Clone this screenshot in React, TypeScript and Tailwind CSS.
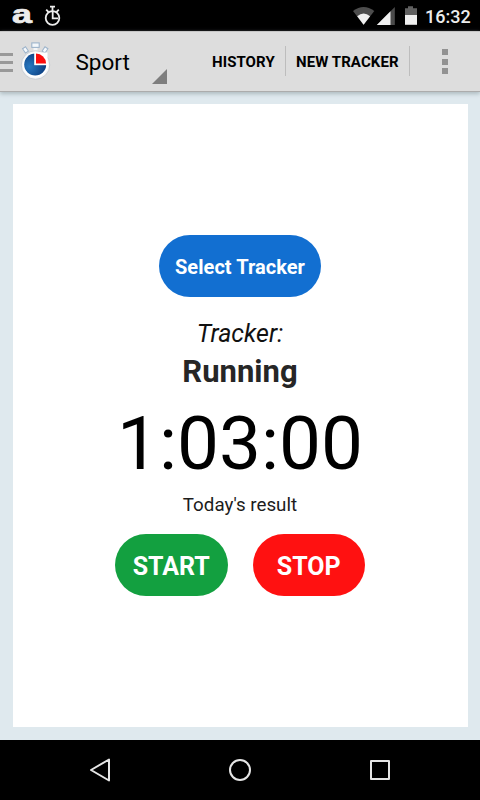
import type { ReactNode } from "react";

function AppLogo() {
  return (
    <svg width="36" height="44" viewBox="0 0 36 44" className="shrink-0">
      <defs>
        <radialGradient id="dial" cx="0.25" cy="0.6" r="0.8">
          <stop offset="0" stopColor="#2878c0" />
          <stop offset="1" stopColor="#073678" />
        </radialGradient>
      </defs>
      <rect x="16.5" y="5" width="4" height="6" fill="#f4f6f8" />
      <rect x="14.8" y="1.9" width="7.4" height="4.5" fill="#f3f7fb" stroke="#9db4cb" strokeWidth="1.1" />
      <g fill="#f6f9fc" stroke="#9db4cb" strokeWidth="1">
        <rect x="-1.8" y="-2.6" width="3.6" height="5.2" transform="translate(8.5 8.9) rotate(-34)" />
        <rect x="-1.8" y="-2.6" width="3.6" height="5.2" transform="translate(28 8.9) rotate(34)" />
      </g>
      <circle cx="18.5" cy="24" r="14.3" fill="#f4f5f6" stroke="#c5cbd1" strokeWidth="0.9" />
      <circle cx="18.3" cy="24" r="12.5" fill="#fff" />
      <circle cx="18.2" cy="23.5" r="11" fill="url(#dial)" />
      <path d="M17.2 11.5V24.2H30.5V11.5z" fill="#fff" />
      <path d="M19 12.6A10.2 10.2 0 0 1 29.1 22.4H19z" fill="#fb0d0d" />
    </svg>
  );
}

function StatusBar() {
  return (
    <div className="flex h-[31px] items-center bg-black pl-3 text-white">
      <svg width="52" height="31" viewBox="0 0 52 31">
        <text x="0" y="22.7" transform="scale(1.38 1)" fill="#ececec" stroke="#ececec" strokeWidth="0.7" className="font-['Liberation_Sans',sans-serif] text-[26px] font-bold">a</text>
        <g fill="none" stroke="#ededed" strokeWidth="1.8">
          <circle cx="40.5" cy="18" r="6.8" />
          <path d="M40.7 12v6.3h5.3M38 6.6h5M40.5 7v4M34.2 9.6l2.4 2.6M46.8 9.6l-2.4 2.6" />
        </g>
      </svg>
      <svg width="64" height="31" viewBox="0 0 64 31" className="ml-[289px]">
        <path d="M0 11Q10.6 2.8 21.3 11L10.6 24.7z" fill="#4d4d4d" />
        <path d="M4.2 16.3Q10.6 10.8 17.1 16.3L10.6 24.7z" fill="#f0f0f0" />
        <path d="M41.8 7v18H23.8z" fill="#4b4b4b" />
        <path d="M37.5 11.3V25H23.8z" fill="#f0f0f0" />
        <path d="M52 8.2h3V6.3h5v1.9h4v7H52z" fill="#606060" />
        <path d="M52 15h12v9.8H52z" fill="#f0f0f0" />
      </svg>
      <span className="ml-[8px] mt-[3px] text-[18px] leading-[22px] font-medium text-[#ececec]">16:32</span>
    </div>
  );
}

function Header() {
  return (
    <header className="relative z-10 flex h-[61px] items-start border-t border-b border-t-[#c6c6c6] border-b-[#acacac] bg-[#dddddd] text-black shadow-[0_2px_4px_#aebbc0]">
      <div className="mt-[21px] flex w-[13px] flex-col gap-[5px]">
        <span className="h-[3px] bg-[#999]" />
        <span className="h-[3px] bg-[#999]" />
        <span className="h-[3px] bg-[#999]" />
      </div>
      <div className="ml-[4px] mt-[9px]"><AppLogo /></div>
      <div className="ml-[22.5px] mt-[16px] w-[76.5px] text-[22.5px] leading-7">Sport</div>
      <svg width="15" height="15" viewBox="0 0 15 15" className="mt-[37px]"><path d="M15 0v15H0z" fill="#7e7e7e" /></svg>
      <div className="ml-[45px] mt-[20px] w-[73px] whitespace-nowrap text-[15px] leading-5 font-bold tracking-[0.08px]">HISTORY</div>
      <span className="mt-[14px] h-[30px] w-px bg-[#bdbdbd]" />
      <div className="ml-[10px] mt-[20px] w-[113px] whitespace-nowrap text-[15px] leading-5 font-bold tracking-[0.08px]">NEW TRACKER</div>
      <span className="mt-[14px] h-[30px] w-px bg-[#bdbdbd]" />
      <div className="ml-[32px] mt-[17px] flex w-[6px] flex-col gap-[3.5px]">
        <span className="h-[6px] bg-[#929292]" />
        <span className="h-[6px] bg-[#929292]" />
        <span className="h-[6px] bg-[#929292]" />
      </div>
    </header>
  );
}

function Pill({ className, children }: { className: string; children: ReactNode }) {
  return (
    <button className={`flex items-center justify-center rounded-full font-bold text-white ${className}`}>
      {children}
    </button>
  );
}

export default function App() {
  return (
    <div className="flex h-[800px] w-[480px] flex-col overflow-hidden bg-[#dfe9ee] font-[Roboto,sans-serif]">
      <StatusBar />
      <Header />
      <main className="flex flex-1 flex-col px-[12.5px] pt-[12px] pb-[13px]">
        <section className="flex flex-1 flex-col items-center bg-white pt-[131px]">
          <Pill className="h-[62px] w-[162px] bg-[#126fd1] pt-[2px] text-[20px] tracking-[0.05px]">Select Tracker</Pill>
          <div className="mt-[22px] text-[25px] leading-[30px] text-[#111] italic">Tracker:</div>
          <div className="mt-[5px] text-[31px] leading-[36px] font-bold text-[#262626]">Running</div>
          <div className="mt-[10px] text-[74.7px] leading-[88px] text-black">1:03:00</div>
          <div className="mt-[5px] text-[18.75px] leading-[24px] text-[#1c1c1c]">Today's result</div>
          <div className="mt-[17px] flex gap-[25px]">
            <Pill className="h-[62px] w-[112.5px] bg-[#13a040] pt-[4px] text-[25px]">START</Pill>
            <Pill className="h-[62px] w-[112.5px] bg-[#ff1111] pt-[4px] text-[25px]">STOP</Pill>
          </div>
        </section>
      </main>
      <nav className="flex h-[60px] items-center justify-between bg-black px-[86px]">
        <svg width="28" height="28" viewBox="0 0 28 28" fill="none" stroke="#e6e6e6" strokeWidth="2"><path d="M23 3.5v21L5 14z" strokeLinejoin="round" /></svg>
        <svg width="28" height="28" viewBox="0 0 28 28" fill="none" stroke="#e6e6e6" strokeWidth="2"><circle cx="14" cy="14" r="10" /></svg>
        <svg width="28" height="28" viewBox="0 0 28 28" fill="none" stroke="#e6e6e6" strokeWidth="2"><rect x="5" y="5" width="18" height="18" strokeLinejoin="round" /></svg>
      </nav>
    </div>
  );
}
